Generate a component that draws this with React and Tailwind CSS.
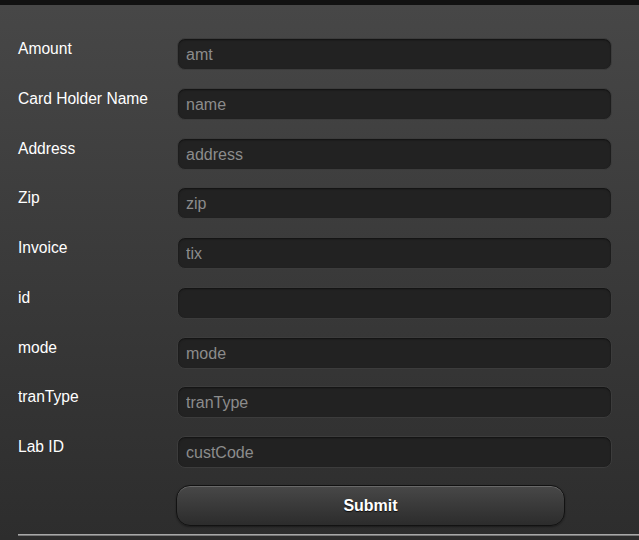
import React from 'react';

const fields = [
    { label: 'Amount', placeholder: 'amt' },
    { label: 'Card Holder Name', placeholder: 'name' },
    { label: 'Address', placeholder: 'address' },
    { label: 'Zip', placeholder: 'zip' },
    { label: 'Invoice', placeholder: 'tix' },
    { label: 'id', placeholder: '' },
    { label: 'mode', placeholder: 'mode' },
    { label: 'tranType', placeholder: 'tranType' },
    { label: 'Lab ID', placeholder: 'custCode' },
];

const App = () => {
    return (
        <div className="w-[639px] h-[540px] overflow-hidden flex flex-col font-['Liberation_Sans',Arial,sans-serif]">
            <div className="h-[5px] bg-[#111111] shrink-0" />
            <div className="flex-1 bg-gradient-to-b from-[#474747] to-[#2d2d2d] pt-[33px] pl-[18px] flex flex-col">
                <form className="flex flex-col gap-[17.75px] pr-[27px]" onSubmit={e => e.preventDefault()}>
                    {fields.map(f => (
                        <div key={f.label} className="flex items-start">
                            <label className="w-[159px] shrink-0 pt-[2px] text-[15.6px] leading-[18px] text-white">{f.label}</label>
                            <input
                                type="text"
                                placeholder={f.placeholder}
                                className="flex-1 h-[32px] rounded-[8px] bg-[#222222] border border-[#3c3c3c] shadow-[inset_0_1px_2px_rgba(0,0,0,0.5)] px-[8px] pt-[2px] text-[16px] text-white placeholder:text-[#8c8c8c] outline-none"
                            />
                        </div>
                    ))}
                </form>
                <div className="pl-[158px] mt-[17px]">
                    <button
                        type="submit"
                        className="w-[389px] h-[41px] rounded-[14px] border border-[#121212] bg-gradient-to-b from-[#484848] to-[#2c2c2c] shadow-[inset_0_1px_0_rgba(255,255,255,0.18),0_1px_2px_rgba(0,0,0,0.4)] text-white font-bold text-[16px] [text-shadow:0_1px_1px_rgba(0,0,0,0.8)]"
                    >
                        Submit
                    </button>
                </div>
                <div className="mt-[8px] h-[2px] bg-[#a8a8a8] border-b border-[#777]" />
            </div>
        </div>
    );
};

export default App;
